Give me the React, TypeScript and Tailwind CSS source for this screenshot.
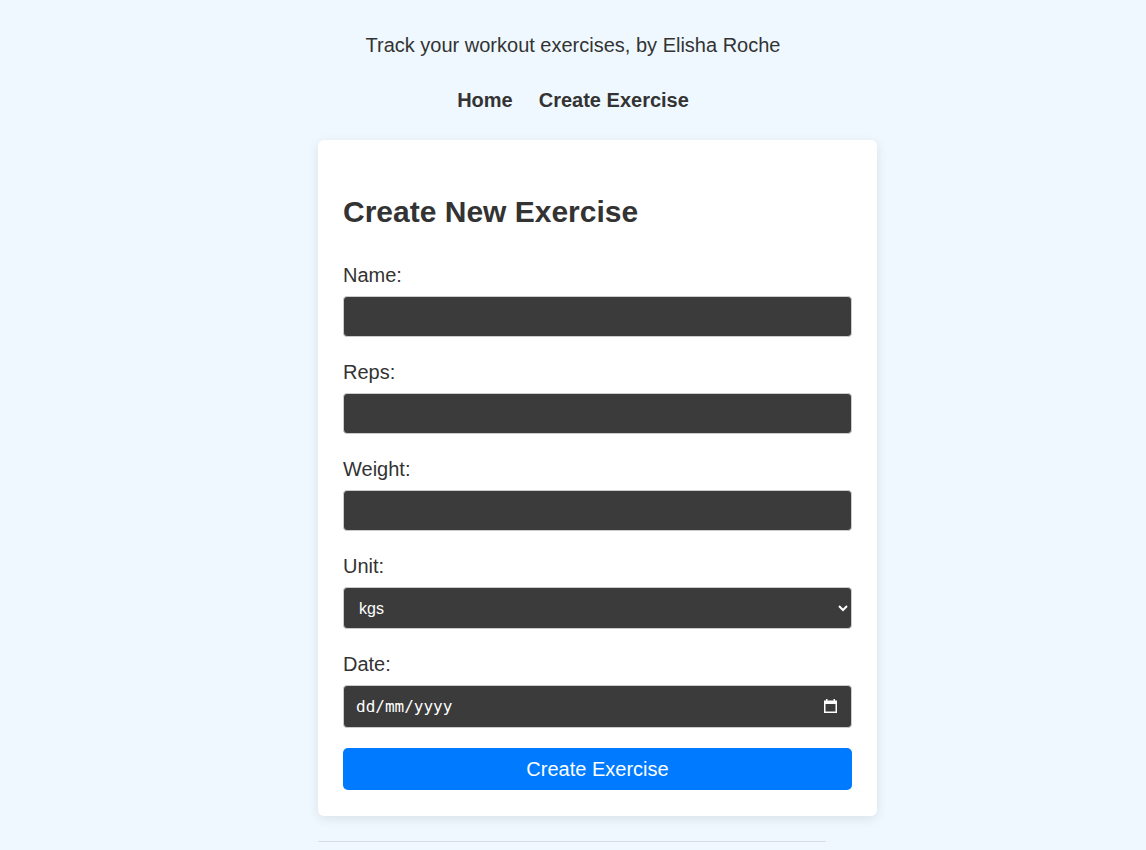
import { useState } from "react";

const fields = [
  { id: "name", label: "Name:", type: "text" },
  { id: "reps", label: "Reps:", type: "number" },
  { id: "weight", label: "Weight:", type: "number" },
];

const inputClass =
  "block w-full h-[41px] rounded-[4px] border border-[#ccc] bg-[#3b3b3b] px-[14px] text-[16px] text-white outline-none";

const CalendarGlyph = () => (
  <svg width="13" height="14" viewBox="0 0 13 14" fill="none" className="text-white">
    <rect x="2" y="0" width="1.5" height="2" fill="currentColor" />
    <rect x="9.5" y="0" width="1.5" height="2" fill="currentColor" />
    <rect x="0.75" y="2.25" width="11.5" height="11" stroke="currentColor" strokeWidth="1.5" />
    <rect x="0.75" y="2" width="11.5" height="3" fill="currentColor" />
  </svg>
);

const App = () => {
  const [unit, setUnit] = useState("kgs");

  return (
    <div className="min-h-[850px] bg-[#f0f8ff] text-[#333] font-['Liberation_Sans',Arial,sans-serif]">
      <header className="pt-[33px] text-center">
        <p className="text-[20px] leading-[24px]">Track your workout exercises, by Elisha Roche</p>
        <nav className="mt-[31px] flex justify-center gap-[26px] text-[20px] leading-[24px] font-bold">
          <a href="#">Home</a>
          <a href="#">Create Exercise</a>
        </nav>
      </header>

      <main className="mx-auto mt-[28px] w-[510px]">
        <div className="w-[559px] rounded-[6px] bg-white px-[25px] pt-[55px] pb-[26px] shadow-[0_3px_12px_rgba(0,0,0,0.09)]">
          <h2 className="text-[30px] leading-[34px] font-bold">Create New Exercise</h2>
          <form className="mt-[35px]" onSubmit={(e) => e.preventDefault()}>
            {fields.map((f) => (
              <div key={f.id} className="mb-[24px]">
                <label htmlFor={f.id} className="block text-[20px] leading-[22px] mb-[10px]">
                  {f.label}
                </label>
                <input id={f.id} type={f.type} className={inputClass} />
              </div>
            ))}
            <div className="mb-[24px]">
              <label htmlFor="unit" className="block text-[20px] leading-[22px] mb-[10px]">
                Unit:
              </label>
              <select
                id="unit"
                value={unit}
                onChange={(e) => setUnit(e.target.value)}
                className="block w-full h-[42px] rounded-[4px] border border-[#ccc] bg-[#3b3b3b] px-[11px] text-[16px] text-white outline-none [color-scheme:dark]"
              >
                <option value="kgs">kgs</option>
                <option value="lbs">lbs</option>
              </select>
            </div>
            <div className="mb-[20px]">
              <label htmlFor="date" className="block text-[20px] leading-[22px] mb-[10px]">
                Date:
              </label>
              {/* date field, shown with the dd/mm/yyyy mask */}
              <div className="relative">
                <input
                  id="date"
                  type="text"
                  placeholder="dd/mm/yyyy"
                  className="block w-full h-[43px] rounded-[4px] border border-[#ccc] bg-[#3b3b3b] pl-[12px] pr-[40px] text-[16px] text-white outline-none placeholder:text-white font-['DejaVu_Sans_Mono',monospace]"
                />
                <span className="pointer-events-none absolute right-[15px] top-[14px]">
                  <CalendarGlyph />
                </span>
              </div>
            </div>
            <button
              type="submit"
              className="block w-full h-[42px] rounded-[5px] bg-[#007bff] text-[20px] text-white"
            >
              Create Exercise
            </button>
          </form>
        </div>
        <hr className="mt-[25px] w-[508px] border-t border-[#d8dde2]" />
      </main>
    </div>
  );
};

export default App;
